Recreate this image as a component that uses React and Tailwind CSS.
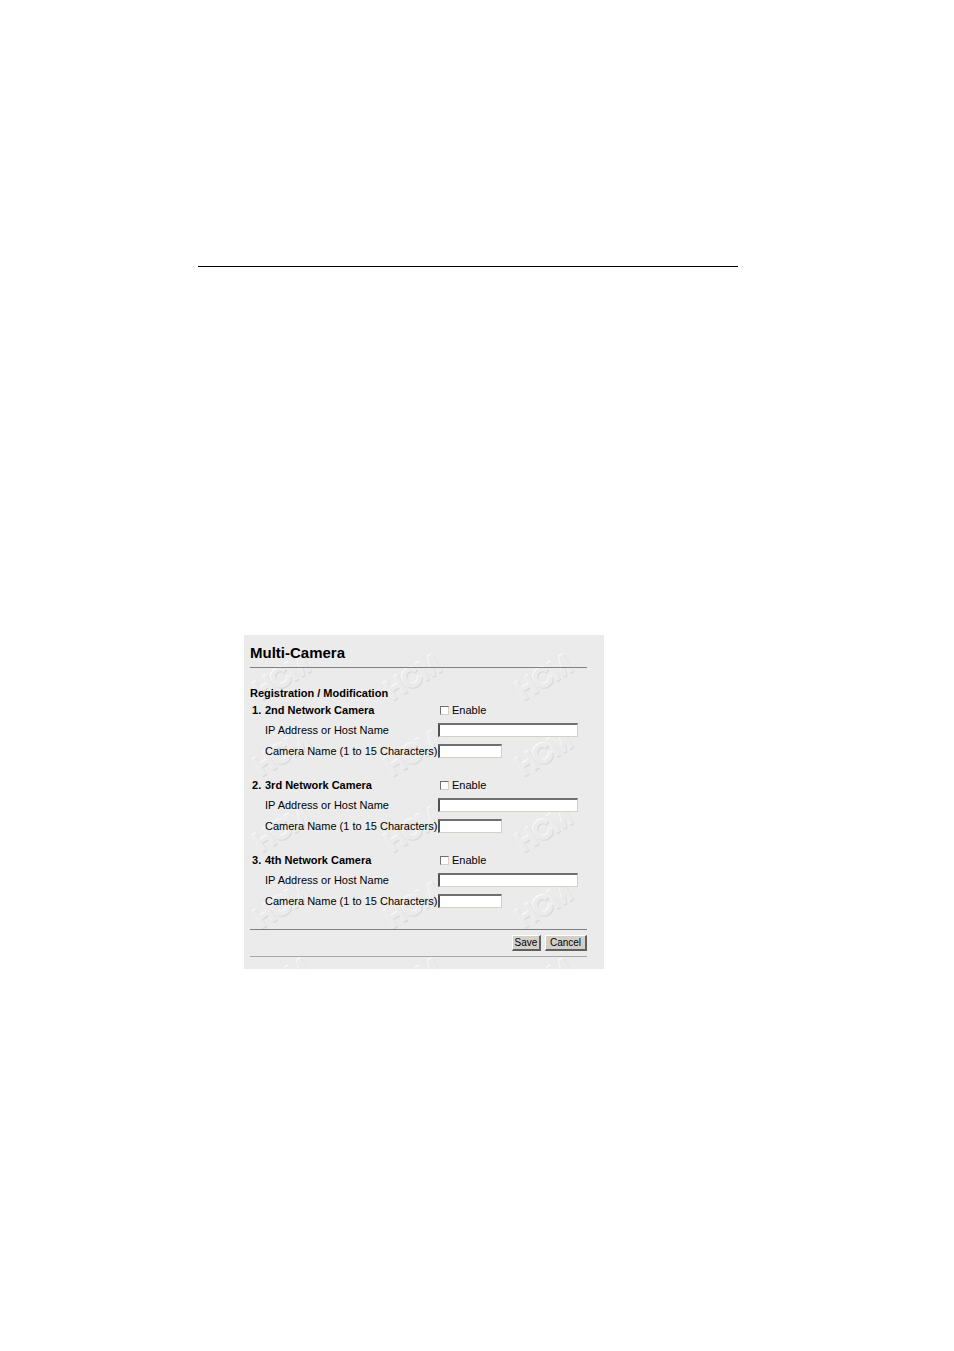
import React from 'react';

const cameras = [
  { id: 1, title: '2nd Network Camera' },
  { id: 2, title: '3rd Network Camera' },
  { id: 3, title: '4th Network Camera' },
];

const inputClass =
  'h-[14px] border-t-2 border-l-2 border-r border-b border-t-[#707070] border-l-[#505050] border-r-[#d4d0c8] border-b-[#d4d0c8] bg-white px-px text-[11px] outline-none';

const buttonClass =
  'h-4 border-t border-l border-r-2 border-b-2 border-t-white border-l-white border-r-[#606060] border-b-[#606060] bg-[#d4d0c8] text-[10px] leading-none';

// Embossed HCM mark, repeated over the panel
const Watermark = () => (
  <svg
    className="absolute inset-0 w-full h-full [filter:drop-shadow(-1px_-1px_0_#f8f8f8)_drop-shadow(1px_1px_0_#d8d8d8)]"
    aria-hidden="true"
  >
    <defs>
      <pattern id="hcm" y="5" width="131" height="76" patternUnits="userSpaceOnUse">
        <text
          transform="translate(17 60) rotate(-31)"
          fontFamily="Liberation Sans, sans-serif"
          fontSize="26"
          fill="#ebebeb"
          stroke="#ebebeb"
          strokeWidth="2"
        >
          HCM
        </text>
      </pattern>
    </defs>
    <rect width="100%" height="100%" fill="url(#hcm)" />
  </svg>
);

const CameraFields = ({ camera }) => (
  <div role="group" aria-labelledby={`title-${camera.id}`} className="mb-[13px]">
    <div className="flex items-center h-5">
      <span className="w-[15px] pl-[2px] font-bold">{camera.id}.</span>
      <h3 id={`title-${camera.id}`} className="w-[175px] font-bold">{camera.title}</h3>
      <label className="flex items-center gap-[3px]">
        <input
          type="checkbox"
          className="appearance-none w-[9px] h-[9px] border border-t-[#707070] border-l-[#707070] border-r-[#d4d0c8] border-b-[#d4d0c8] bg-white checked:bg-black"
        />
        Enable
      </label>
    </div>
    <div className="flex items-center h-5 pl-[15px]">
      <label htmlFor={`host-${camera.id}`} className="w-[173px] whitespace-nowrap">
        IP Address or Host Name
      </label>
      <input id={`host-${camera.id}`} type="text" className={`${inputClass} w-[140px]`} />
    </div>
    <div className="flex items-center h-[22px] pl-[15px]">
      <label htmlFor={`name-${camera.id}`} className="w-[173px] whitespace-nowrap">
        Camera Name (1 to 15 Characters)
      </label>
      <input id={`name-${camera.id}`} type="text" maxLength={15} className={`${inputClass} w-16`} />
    </div>
  </div>
);

const App = () => {
  return (
    <main className="min-h-screen bg-white pt-[266px] pl-[198px] pr-[216px] font-['Liberation_Sans',Arial,sans-serif] text-black">
      <hr className="border-t border-black" />

      <section className="relative mt-[368px] ml-[46px] max-w-[360px] overflow-hidden bg-[#ebebeb] text-[11px] leading-[14px]">
        <Watermark />

        <form className="relative pt-2 pr-[17px] pb-3 pl-[6px]" onSubmit={(e) => e.preventDefault()}>
          <h1 className="text-[15px] leading-5 font-bold">Multi-Camera</h1>
          <hr className="mt-1 border-t border-[#808080]" />

          <h2 className="mt-[18px] font-bold">Registration / Modification</h2>
          {cameras.map((camera) => (
            <CameraFields key={camera.id} camera={camera} />
          ))}

          {/* Actions */}
          <hr className="mt-[17px] border-t border-[#808080]" />
          <div className="flex justify-end gap-1 py-[5px]">
            <button type="submit" className={`${buttonClass} w-[29px]`}>
              Save
            </button>
            <button type="button" className={`${buttonClass} w-[42px]`}>
              Cancel
            </button>
          </div>
          <hr className="border-t border-[#a8a8a8]" />
        </form>
      </section>
    </main>
  );
};

export default App;
